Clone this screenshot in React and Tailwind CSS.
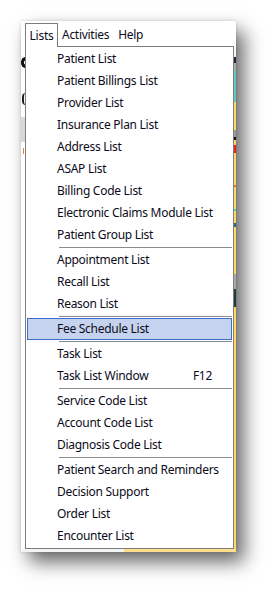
const groups = [
  ['Patient List', 'Patient Billings List', 'Provider List', 'Insurance Plan List', 'Address List', 'ASAP List', 'Billing Code List', 'Electronic Claims Module List', 'Patient Group List'],
  ['Appointment List', 'Recall List', 'Reason List'],
  ['Fee Schedule List'],
  ['Task List', 'Task List Window'],
  ['Service Code List', 'Account Code List', 'Diagnosis Code List'],
  ['Patient Search and Reminders', 'Decision Support', 'Order List', 'Encounter List'],
];

const font = { fontFamily: '"Noto Sans", "Liberation Sans", sans-serif' };

function Item({ label }) {
  if (label === 'Fee Schedule List') {
    return (
      <div className="h-[22px] px-[1px]">
        <div className="h-[22px] flex items-center pl-[29px] bg-[#c5d3ee] border border-[#3d6ecb]">
          {label}
        </div>
      </div>
    );
  }
  return (
    <div className="h-[22px] flex items-center pl-[31px]">
      <span>{label}</span>
      {label === 'Task List Window' && <span className="ml-auto pr-[21px]">F12</span>}
    </div>
  );
}

function Separator() {
  return (
    <div className="h-[3px] flex items-center pl-[33px] pr-[1px]">
      <div className="h-px w-full bg-[#8c8c8c]" />
    </div>
  );
}

export default function App() {
  return (
    <div className="w-[277px] h-[594px] bg-white pl-[21px] pt-[21px]" style={font}>
      <div className="w-[215px] h-[531px] bg-white flex flex-col shadow-[8px_10px_18px_rgba(0,0,0,0.6),0_0_3px_rgba(0,0,0,0.15)] text-[12px] tracking-[-0.28px] text-[#0b0b1a]">
        {/* menu bar */}
        <div className="h-[25px] flex items-end pl-[4px] shrink-0">
          <div className="relative z-10 w-[33px] h-[24px] -mb-px bg-white border border-b-0 border-[#7d7d7d] flex items-center justify-center">
            Lists
          </div>
          <div className="h-[23px] flex items-center pl-[4px] pr-[9px]">Activities</div>
          <div className="h-[23px] flex items-center">Help</div>
        </div>

        {/* body */}
        <div className="flex h-[503px] shrink-0">
          <div className="w-[4px] flex flex-col overflow-hidden">
            <div className="h-[11px] shrink-0" />
            <div className="h-[11px] w-[5px] border-l-[3px] border-y-[3px] border-[#111] rounded-l-full shrink-0" />
            <div className="h-[25px] shrink-0" />
            <div className="h-[12px] w-[4px] ml-[1px] border-l-[2px] border-[#222] rounded-l-full shrink-0" />
            <div className="h-[12px] shrink-0" />
            <div className="h-[25px] bg-[#d8d8d8] shrink-0" />
            <div className="h-[6px] shrink-0" />
            <div className="h-[6px] w-[1px] ml-[2px] bg-[#e0803a] shrink-0" />
          </div>

          <div className="w-[209px] border border-[#7d7d7d] bg-white py-[1px] flex flex-col">
            {groups.map((g, i) => (
              <div key={i}>
                {i > 0 && <Separator />}
                {g.map((label) => (
                  <Item key={label} label={label} />
                ))}
              </div>
            ))}
          </div>

          <div className="w-[2px] flex flex-col bg-[#ffd866]">
            <div className="h-[11px] bg-[#f5f5f5] shrink-0" />
            <div className="h-[6px] bg-[#2a2440] shrink-0" />
            <div className="h-[7px] bg-[#a8a8a8] shrink-0" />
            <div className="h-[32px] bg-[#63c9c0] shrink-0" />
            <div className="h-[28px] shrink-0" />
            <div className="h-[7px] bg-[#9a9a9a] shrink-0" />
            <div className="h-[3px] bg-[#111] shrink-0" />
            <div className="h-[5px] shrink-0" />
            <div className="h-[8px] bg-[#e82020] shrink-0" />
            <div className="h-[32px] shrink-0" />
            <div className="h-[2px] bg-[#e07040] shrink-0" />
            <div className="h-[22px] shrink-0" />
            <div className="h-[2px] bg-[#5cc8d0] shrink-0" />
            <div className="h-[12px] shrink-0" />
            <div className="h-[4px] bg-[#2a6a70] shrink-0" />
            <div className="h-[47px] shrink-0" />
            <div className="h-[15px] bg-[#a8a8a8] shrink-0" />
            <div className="h-[18px] bg-[#1e3a3c] shrink-0" />
          </div>
        </div>

        {/* bottom strip */}
        <div className="flex h-[3px] shrink-0">
          <div className="w-[103px] bg-[#f4f4f4]" />
          <div className="flex-1 bg-[#ffe08a]" />
        </div>
      </div>
    </div>
  );
}
